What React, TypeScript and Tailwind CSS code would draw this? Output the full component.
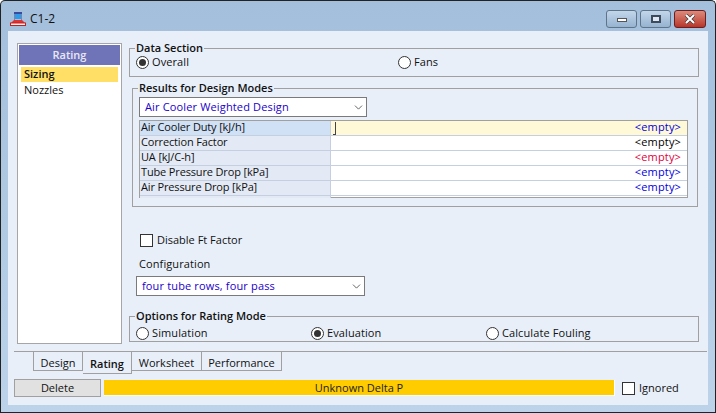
import { ChevronDown } from 'lucide-react';

const FONT = "font-['Open_Sans','Noto_Sans',sans-serif]";

interface GridRow {
  label: string;
  color: string;
}

const gridRows: GridRow[] = [
  { label: 'Air Cooler Duty [kJ/h]', color: 'text-[#0000e0]' },
  { label: 'Correction Factor', color: 'text-black' },
  { label: 'UA [kJ/C-h]', color: 'text-[#e0003c]' },
  { label: 'Tube Pressure Drop [kPa]', color: 'text-[#0000e0]' },
  { label: 'Air Pressure Drop [kPa]', color: 'text-[#0000e0]' },
];

function Radio({ label, checked }: { label: string; checked?: boolean }) {
  return (
    <div className="flex items-center gap-[3px]">
      <span className="flex h-[13px] w-[13px] items-center justify-center rounded-full border border-[#333] bg-white">
        {checked && <span className="h-[7px] w-[7px] rounded-full bg-[#333]" />}
      </span>
      <span className="tracking-[0.1px]">{label}</span>
    </div>
  );
}

function Check({ label }: { label: string }) {
  return (
    <div className="flex items-center gap-[4px]">
      <span className="h-[13px] w-[13px] border border-[#333] bg-white" />
      <span>{label}</span>
    </div>
  );
}

function Select({ value, width }: { value: string; width: string }) {
  return (
    <div className={`flex h-[20px] items-center justify-between border border-[#7a7a7a] bg-white pl-[5px] pr-[1px] tracking-[0.15px] text-[#2200cc] ${width}`}>
      <span>{value}</span>
      <ChevronDown size={13} strokeWidth={1.5} className="text-[#444]" />
    </div>
  );
}

function Tab({ label, active, width }: { label: string; active?: boolean; width: string }) {
  return (
    <div className={`flex items-center justify-center border border-t-0 border-[#a0a0a0] pt-[3px] ${width} ${active ? 'h-[22px] font-semibold' : 'h-[19px] border-l-0'}`}>
      {label}
    </div>
  );
}

function LogoIcon() {
  return (
    <svg width="16" height="14" viewBox="0 0 16 14">
      <rect x="4" y="0" width="8" height="2" fill="#3a4a9c" />
      <rect x="5" y="2" width="6" height="5" fill="#2f9be8" />
      <rect x="4" y="2" width="1" height="6" fill="#7a83a8" />
      <rect x="11" y="2" width="1" height="6" fill="#7a83a8" />
      <path d="M1 11 L4 8 H12 L15 11 Z" fill="#e03030" />
      <rect x="0.5" y="11" width="15" height="2.5" fill="#f4f4f4" stroke="#c02020" strokeWidth="1" />
    </svg>
  );
}

export default function App() {
  return (
    <div className={`flex h-[413px] w-[716px] flex-col overflow-hidden rounded-t-[5px] border border-[#222] border-b-[#0d2b3a] bg-gradient-to-b from-[#a3bfdc] to-[#bcd3ea] text-[11px] leading-[14px] text-[#111] ${FONT}`}>
      {/* Title bar */}
      <div className="flex h-[30px] shrink-0 items-start justify-between pl-[9px] pr-[9px]">
        <div className="flex items-center gap-[4px] pt-[11px]">
          <LogoIcon />
          <span className="text-[12px] text-[#111]">C1-2</span>
        </div>
        <div className="flex gap-[3px] pt-[9px]">
          <div className="flex h-[18px] w-[31px] items-center justify-center rounded-[3px] border border-[#5f7488] bg-gradient-to-b from-[#c3d6ea] to-[#95b3d0]">
            <span className="mt-[2px] h-[4px] w-[10px] border border-[#555] bg-white" />
          </div>
          <div className="flex h-[18px] w-[31px] items-center justify-center rounded-[3px] border border-[#5f7488] bg-gradient-to-b from-[#c3d6ea] to-[#95b3d0]">
            <span className="h-[8px] w-[10px] border-2 border-[#3d4a5c] bg-[#dfe8f2]" />
          </div>
          <div className="flex h-[18px] w-[32px] items-center justify-center rounded-[3px] border border-[#6b1f1f] bg-gradient-to-b from-[#dc8a7c] to-[#b8332a]">
            <svg width="12" height="10" viewBox="0 0 12 10">
              <path d="M2 1 L10 9 M10 1 L2 9" stroke="#3a3a3a" strokeWidth="3.4" />
              <path d="M2 1 L10 9 M10 1 L2 9" stroke="#fff" strokeWidth="2" />
            </svg>
          </div>
        </div>
      </div>

      {/* Client area */}
      <div className="mx-[7px] mb-[7px] flex min-h-0 flex-1 flex-col bg-[#e8eff9] pt-[12px]">
        <div className="flex h-[301px] gap-[7px] pl-[9px]">
          {/* Side list */}
          <div className="h-[301px] w-[105px] shrink-0 border border-[#a6a6a6] bg-white p-px">
            <div className="flex h-[20px] items-center justify-center bg-[#6f73b8] font-semibold text-[#e8e8f4]">Rating</div>
            <div className="mx-[2px] mt-[2px] flex h-[15px] items-center bg-[#ffdf66] pb-[2px] pl-[3px] font-semibold">Sizing</div>
            <div className="ml-[5px] flex h-[16px] items-center">Nozzles</div>
          </div>

          {/* Right column */}
          <div className="flex w-[570px] flex-col">
            <fieldset className="mt-[-2px] h-[36px] border border-[#a0a0a0] pl-[6px]">
              <legend className="ml-[-1px] px-px font-semibold">Data Section</legend>
              <div className="flex">
                <div className="w-[262px]"><Radio label="Overall" checked /></div>
                <Radio label="Fans" />
              </div>
            </fieldset>

            <fieldset className="ml-[3px] mr-px mt-[4px] h-[126px] border border-[#a0a0a0] pl-[6px] pr-[9px]">
              <legend className="ml-[-1px] px-px font-semibold">Results for Design Modes</legend>
              <div className="mt-[2px]">
                <Select value="Air Cooler Weighted Design" width="w-[228px]" />
              </div>
              <div className="mt-[3px] h-[78px] border border-[#a0a0a0] bg-white">
                {gridRows.map((row, i) => (
                  <div key={row.label} className="flex h-[15px] border-b border-[#c4d0e0]">
                    <div className={`w-[191px] border-r border-[#c4d0e0] pl-[1px] leading-[12px] tracking-[-0.15px] ${i === 0 ? 'bg-[#d0e1f6]' : 'bg-[#e3eaf5]'}`}>
                      {row.label}
                    </div>
                    <div className={`flex flex-1 items-center justify-between pb-[3px] pr-[6px] ${i === 0 ? 'bg-[#fff9d8]' : 'bg-white'}`}>
                      {i === 0 ? <span className="ml-[2px] mt-[3px] h-[13px] w-[3px] border-r border-b border-[#444]" /> : <span />}
                      <span className={`tracking-[0.15px] ${row.color}`}>&lt;empty&gt;</span>
                    </div>
                  </div>
                ))}
                <div className="flex h-[2px]">
                  <div className="w-[191px] border-r border-[#c4d0e0] bg-[#e3eaf5]" />
                </div>
              </div>
            </fieldset>

            <div className="ml-[11px] mt-[26px]"><Check label="Disable Ft Factor" /></div>
            <div className="ml-[10px] mt-[10px] tracking-[0.1px]">Configuration</div>
            <div className="ml-[7px] mt-[5px]">
              <Select value="four tube rows, four pass" width="w-[229px]" />
            </div>

            <fieldset className="mt-[13px] h-[33px] border border-[#a0a0a0] pl-[6px]">
              <legend className="ml-[-1px] px-px font-semibold">Options for Rating Mode</legend>
              <div className="mt-[3px] flex">
                <div className="w-[175px]"><Radio label="Simulation" /></div>
                <div className="w-[175px]"><Radio label="Evaluation" checked /></div>
                <Radio label="Calculate Fouling" />
              </div>
            </fieldset>
          </div>
        </div>

        {/* Tabs */}
        <div className="ml-[6px] mr-[1px] mt-[7px] h-[22px] border-t border-[#a0a0a0] pl-[19px]">
          <div className="flex items-start">
            <Tab label="Design" width="w-[50px] !border-l" />
            <Tab label="Rating" active width="w-[49px] border-l-0" />
            <Tab label="Worksheet" width="w-[70px]" />
            <Tab label="Performance" width="w-[80px]" />
          </div>
        </div>

        {/* Status row */}
        <div className="ml-[6px] mt-[6px] flex items-center">
          <div className="flex h-[18px] w-[87px] items-center justify-center border border-[#a0a0a0] bg-[#e1e1e1]">Delete</div>
          <div className="ml-[3px] flex h-[16px] w-[511px] items-center justify-center border-r border-b border-white bg-[#ffcc00] text-[#222]">
            Unknown Delta P
          </div>
          <div className="ml-[7px]"><Check label="Ignored" /></div>
        </div>
      </div>
    </div>
  );
}
